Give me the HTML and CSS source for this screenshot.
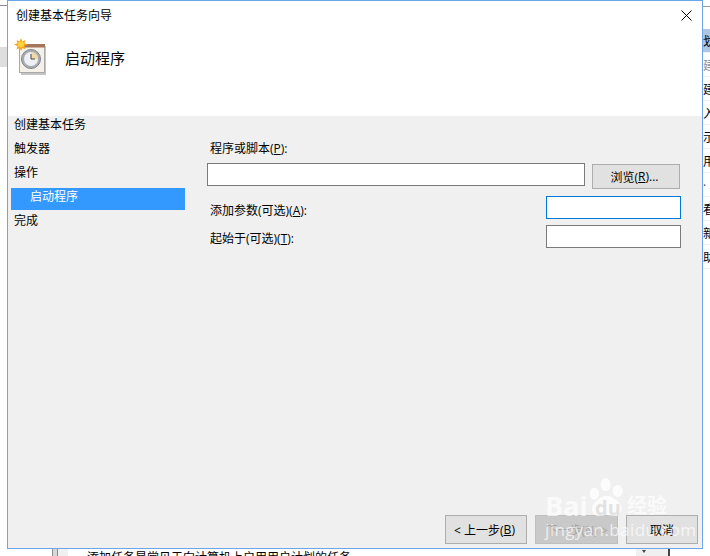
FILE: index.html
```html
<!DOCTYPE html>
<html lang="zh-CN">
<head>
<meta charset="utf-8">
<title>创建基本任务向导</title>
<link rel="stylesheet" href="styles.css">
</head>
<body>
<div class="backdrop">
  <div class="bg-line-left"></div>
  <div class="bg-patch-left"></div>
  <div class="bg-line-right"></div>
  <ul class="bg-list">
    <li class="bg-selected">划</li><li class="bg-dim">建</li><li>建</li><li>入</li><li>示</li><li>用</li><li class="bg-dash">·</li><li>看</li><li>新</li><li>助</li>
  </ul>
  <div class="bg-bottom">
    <div class="bg-scroll"></div>
    <div class="bg-gutter"></div>
    <div class="bg-text">添加任务是常见于向计算机上启用用户计划的任务</div>
    <div class="bg-pane"><span class="bg-arrow"></span></div>
    <div class="bg-rule"></div>
  </div>
</div>

<section class="wizard">
  <div class="titlebar">
    <span class="title">创建基本任务向导</span>
    <svg class="close" width="11" height="11" viewBox="0 0 11 11"><path d="M.5.5l10 10M10.5.5l-10 10" stroke="#000" stroke-width="1" fill="none"/></svg>
  </div>
  <header class="head">
    <svg class="head-icon" width="34" height="38" viewBox="0 0 34 38">
      <rect x="7" y="8" width="25" height="29" fill="#c4c4c4"/>
      <rect x="5.500" y="6.500" width="25" height="28" fill="#f5f1e8" stroke="#a9a9a9"/>
      <rect x="7" y="6" width="24" height="3.500" fill="#a5755a"/>
      <circle cx="17" cy="21" r="9.500" fill="#a8adb3" stroke="#7f868d"/>
      <circle cx="17" cy="21" r="7" fill="#eef0f3"/>
      <path d="M17 21V14A7 7 0 0 1 24 21Z" fill="#f1d9a8"/>
      <path d="M17 16V21h4" stroke="#444" stroke-width="1" fill="none"/>
      <path d="M7 0l1.300 3.400L11.500 2 10.400 5.200 14 6.600 10.400 8 11.500 11.300 8.300 9.900 7 13 5.700 9.900 2.500 11.300 3.600 8 0 6.600 3.600 5.200 2.500 2 5.700 3.400Z" fill="#f7a11a"/>
      <circle cx="7" cy="6.500" r="3" fill="#ffd23c"/>
    </svg>
    <h1 class="head-title">启动程序</h1>
  </header>
  <div class="content">
    <nav class="steps">
      <div class="step">创建基本任务</div>
      <div class="step">触发器</div>
      <div class="step">操作</div>
      <div class="step step-sub">启动程序</div>
      <div class="step">完成</div>
    </nav>
    <form class="form">
      <label class="label label-first">程序或脚本(<u>P</u>):</label>
      <div class="row row-program">
        <div class="field field-program"></div>
        <div class="btn btn-browse">浏览(<u>R</u>)...</div>
      </div>
      <div class="row row-args">
        <label class="label">添加参数(可选)(<u>A</u>):</label>
        <div class="field field-small field-focus"></div>
      </div>
      <div class="row row-start">
        <label class="label">起始于(可选)(<u>T</u>):</label>
        <div class="field field-small"></div>
      </div>
    </form>
  </div>
  <footer class="foot">
    <div class="btn btn-back">&lt; 上一步(<u>B</u>)</div>
    <div class="btn btn-next">下一步(N) &gt;</div>
    <div class="btn btn-cancel">取消</div>
  </footer>
</section>

<div class="watermark">
  <div class="wm-top">
    <span class="wm-bai">Bai</span>
    <svg class="wm-paw" width="37" height="40" viewBox="0 0 40 43">
      <ellipse cx="7" cy="17" rx="5" ry="6.500"/>
      <ellipse cx="19" cy="7" rx="5.500" ry="7"/>
      <ellipse cx="32" cy="14" rx="5.500" ry="6.500"/>
      <path d="M20 19c-6 0-9 4-13 8-5 5-3 14 5 14 3 0 5-1 8-1s5 1 9 1c8 0 9-9 5-14-4-3-8-8-14-8Z"/>
    </svg>
    <span class="wm-du">du</span>
    <span class="wm-jy">经验</span>
  </div>
  <div class="wm-url">jingyan.baidu.com</div>
</div>
</body>
</html>
```
FILE: styles.css
```css
* { box-sizing: border-box; }
html, body { margin: 0; padding: 0; }
body {
  width: 710px;
  height: 556px;
  position: relative;
  overflow: hidden;
  background: #fff;
  color: #000;
  font-family: "Open Sans", "Noto Sans CJK SC", sans-serif;
  font-size: 12px;
}
u { text-underline-offset: 1px; }

/* Application behind the dialog */
.backdrop { position: absolute; inset: 0; }
.bg-line-left { position: absolute; left: 0; top: 5px; width: 7px; height: 1px; background: #8a8a8a; }
.bg-patch-left { position: absolute; left: 0; top: 47px; width: 7px; height: 20px; background: #dddddd; }
.bg-line-right { position: absolute; left: 703px; top: 6px; width: 7px; height: 1px; background: #9a9a9a; }
.bg-list {
  position: absolute;
  left: 703px;
  top: 29px;
  margin: 0;
  padding: 0;
  list-style: none;
  width: 7px;
  overflow: hidden;
}
.bg-list li {
  width: 7px;
  height: 24px;
  padding-top: 1px;
  line-height: 24px;
  font-size: 12px;
  white-space: nowrap;
  border-bottom: 1px solid #efefef;
}
.bg-selected { background: #afc6e0; }
.bg-dim { color: #8d8d8d; }
.bg-dash { color: #444; }
.bg-bottom { position: absolute; left: 0; right: 0; top: 549px; height: 7px; display: flex; overflow: hidden; }
.bg-scroll { margin-left: 52px; width: 6px; border-left: 1px solid #8c8c8c; border-right: 1px solid #8c8c8c; background: #d8d8d8; }
.bg-gutter { width: 10px; background: #f0f0f0; }
.bg-text { width: 557px; padding-left: 19px; line-height: 12px; margin-top: 3px; font-size: 12px; white-space: nowrap; }
.bg-pane { width: 32px; margin-left: 11px; background: #f0f0f0; position: relative; }
.bg-arrow { position: absolute; left: 6px; top: 1px; border: 2px solid transparent; border-top: 3px solid #444; }
.bg-rule { width: 2px; background: #444; }

/* Dialog */
.wizard {
  position: absolute;
  left: 7px;
  top: 0;
  width: 696px;
  height: 549px;
  border: 1px solid #6ca6e8;
  background: #f0f0f0;
  display: flex;
  flex-direction: column;
}
.titlebar {
  height: 31px;
  flex: none;
  background: #fff;
  display: flex;
  align-items: flex-start;
  justify-content: space-between;
  padding: 7px 10px 0 8px;
}
.title { line-height: 16px; }
.close { margin-top: 2px; }
.head {
  height: 84px;
  flex: none;
  background: #fff;
  display: flex;
  align-items: flex-start;
  padding: 6px 0 0 6px;
}
.head-icon { flex: none; }
.head-title {
  margin: 9px 0 0 17px;
  font-size: 15px;
  font-weight: 400;
  line-height: 22px;
}
.content { flex: 1; display: flex; min-height: 0; }
.steps {
  width: 199px;
  flex: none;
  margin-top: -2px;
  padding-left: 3px;
  display: flex;
  flex-direction: column;
  gap: 2px;
}
.step { height: 22px; width: 174px; line-height: 22px; padding-left: 3px; }
.step-sub {
  background: #3399ff;
  color: #fff;
  padding-left: 19px;
  line-height: 18px;
  margin: 2px 0 -2px;
}
.form { width: 474px; padding-top: 25px; display: flex; flex-direction: column; }
.label { display: block; padding-left: 3px; line-height: 16px; }
.label-first { margin-bottom: 6px; }
.row { display: flex; justify-content: space-between; }
.row-program { height: 26px; }
.row-args { margin-top: 7px; }
.row-start { margin-top: 6px; }
.row-args .label { margin-top: 7px; }
.row-start .label { margin-top: 6px; }
.field { height: 23px; background: #fff; border: 1px solid #7a7a7a; }
.field-program { width: 378px; }
.field-small { width: 135px; }
.field-focus { border-color: #0078d7; }
.btn {
  display: flex;
  align-items: center;
  justify-content: center;
  background: #e1e1e1;
  border: 1px solid #adadad;
}
.btn-browse { width: 88px; height: 25px; margin: 1px 1px 0 0; padding-right: 3px; }
.foot { flex: none; display: flex; justify-content: flex-end; gap: 8px; padding: 0 4px 4px 0; }
.foot .btn { height: 29px; }
.btn-back { width: 82px; padding-right: 3px; }
.btn-next { width: 83px; background: #c9c9c9; border-color: #bfbfbf; color: #a5a5a5; }
.btn-cancel { width: 72px; }

/* Watermark laid over the dialog */
.watermark {
  position: absolute;
  left: 545px;
  top: 478px;
  width: 140px;
  color: rgba(255, 255, 255, .7);
  font-family: "Open Sans", "Noto Sans CJK SC", sans-serif;
}
.wm-top { height: 42px; position: relative; }
.wm-bai { position: absolute; left: 0; top: 10px; font-size: 27px; line-height: 36px; font-weight: 700; }
.wm-paw { position: absolute; left: 43px; top: 0; fill: rgba(255, 255, 255, .8); }
.wm-du { position: absolute; left: 50px; top: 17px; font-size: 20px; line-height: 26px; font-weight: 700; color: #e2e2e2; }
.wm-jy { position: absolute; left: 82px; top: 15px; font-size: 20px; line-height: 26px; font-weight: 700; }
.wm-url { font-size: 17px; line-height: 20px; letter-spacing: .4px; white-space: nowrap; }
```
